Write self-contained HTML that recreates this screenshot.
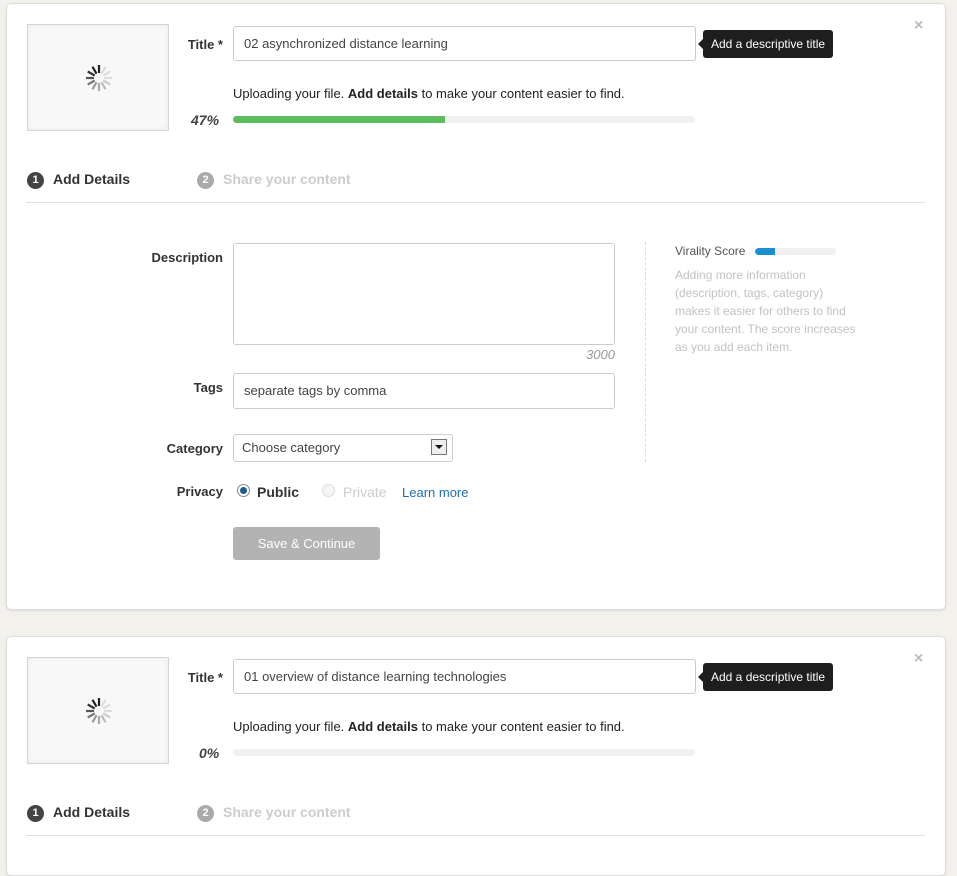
<!DOCTYPE html>
<html><head><meta charset="utf-8"><style>
*{box-sizing:border-box;margin:0;padding:0}
body{width:957px;height:856px;background:#f3f1ec;font-family:"Liberation Sans",Arial,sans-serif;position:relative;overflow:hidden;font-size:13px;color:#333}
.card{position:absolute;left:6px;width:940px;background:#fff;border:1px solid #dcdcdc;border-radius:5px;box-shadow:0 1px 2px rgba(0,0,0,.08)}
.a{position:absolute}
.thumb{left:20px;width:142px;height:107px;background:#f8f8f8;border:1px solid #d5d5d5;box-shadow:inset 0 0 6px rgba(0,0,0,.06)}
.lbl{font-weight:bold;color:#333;text-align:right;font-size:13px}
.inp{border:1px solid #ccc;border-radius:3px;background:#fff;font-size:13px;color:#444;padding-left:10px}
.tip{background:#1e1e1e;color:#fff;border-radius:3px;font-size:12px;padding:0 8px;line-height:28px;height:28px}
.tip:before{content:"";position:absolute;left:-5px;top:9px;border:5px solid transparent;border-left:0;border-right-color:#1e1e1e}
.bar{height:7px;background:#f0f0f0;border-radius:4px;overflow:hidden;width:462px}
.step{font-weight:bold;font-size:14px}
.num{display:inline-block;width:17px;height:17px;border-radius:50%;color:#fff;font-size:11px;text-align:center;line-height:17px;vertical-align:1px;margin-right:9px}
.x{color:#bbb;font-size:16px;font-weight:bold}
</style></head><body>

<svg width="0" height="0" style="position:absolute"><defs><g id="sp" stroke-width="2.2">
<line x1="0" y1="-5" x2="0" y2="-13" stroke="#222"/>
<line x1="0" y1="-5" x2="0" y2="-13" stroke="#ddd" transform="rotate(30)"/>
<line x1="0" y1="-5" x2="0" y2="-13" stroke="#ddd" transform="rotate(60)"/>
<line x1="0" y1="-5" x2="0" y2="-13" stroke="#ddd" transform="rotate(90)"/>
<line x1="0" y1="-5" x2="0" y2="-13" stroke="#ccc" transform="rotate(120)"/>
<line x1="0" y1="-5" x2="0" y2="-13" stroke="#bbb" transform="rotate(150)"/>
<line x1="0" y1="-5" x2="0" y2="-13" stroke="#aaa" transform="rotate(180)"/>
<line x1="0" y1="-5" x2="0" y2="-13" stroke="#999" transform="rotate(210)"/>
<line x1="0" y1="-5" x2="0" y2="-13" stroke="#777" transform="rotate(240)"/>
<line x1="0" y1="-5" x2="0" y2="-13" stroke="#555" transform="rotate(270)"/>
<line x1="0" y1="-5" x2="0" y2="-13" stroke="#333" transform="rotate(300)"/>
<line x1="0" y1="-5" x2="0" y2="-13" stroke="#222" transform="rotate(330)"/>
</g></defs></svg>

<div class="card" style="top:3px;height:607px">
 <div class="a thumb" style="top:20px"><svg class="a" style="left:56px;top:38px" width="30" height="30" viewBox="-15 -15 30 30"><use href="#sp"/></svg></div>
 <div class="a lbl" style="left:159px;top:33px;width:57px">Title *</div>
 <div class="a inp" style="left:226px;top:22px;width:463px;height:35px;line-height:33px">02 asynchronized distance learning</div>
 <div class="a tip" style="left:696px;top:26px">Add a descriptive title</div>
 <div class="a x" style="left:907px;top:13px">×</div>
 <div class="a" style="left:226px;top:82px;color:#222">Uploading your file. <b>Add details</b> to make your content easier to find.</div>
 <div class="a" style="left:184px;top:108px;font-weight:bold;font-style:italic;font-size:14px;color:#444">47%</div>
 <div class="a bar" style="left:226px;top:112px"><div style="width:212px;height:7px;background:#5cbd5d"></div></div>
 <div class="a step" style="left:20px;top:167px;color:#333"><span class="num" style="background:#444">1</span>Add Details</div>
 <div class="a step" style="left:190px;top:167px;color:#ccc"><span class="num" style="background:#aaa">2</span>Share your content</div>
 <div class="a" style="left:19px;top:198px;width:899px;border-top:1px solid #e0e0e0"></div>

 <div class="a lbl" style="left:99px;top:246px;width:117px">Description</div>
 <div class="a inp" style="left:226px;top:239px;width:382px;height:102px"></div>
 <div class="a" style="left:559px;top:343px;width:49px;text-align:right;font-style:italic;color:#999">3000</div>
 <div class="a lbl" style="left:99px;top:376px;width:117px">Tags</div>
 <div class="a inp" style="left:226px;top:369px;width:382px;height:36px;line-height:34px">separate tags by comma</div>
 <div class="a lbl" style="left:99px;top:437px;width:117px">Category</div>
 <div class="a inp" style="left:226px;top:430px;width:220px;height:28px;line-height:26px;padding-left:8px">Choose category
  <div class="a" style="right:5px;top:4px;width:16px;height:16px;border:1px solid #777;background:#eee"><div class="a" style="left:3px;top:5px;border:4px solid transparent;border-top:4px solid #111;border-bottom:0"></div></div></div>
 <div class="a lbl" style="left:99px;top:480px;width:117px">Privacy</div>
 <div class="a" style="left:230px;top:480px;width:13px;height:13px;border-radius:50%;border:1px solid #888;background:#fff"><div style="margin:2px;width:7px;height:7px;border-radius:50%;background:#1a5d8f"></div></div>
 <div class="a" style="left:250px;top:480px;font-weight:bold;font-size:14px;color:#333">Public</div>
 <div class="a" style="left:315px;top:480px;width:13px;height:13px;border-radius:50%;border:1px solid #ddd;background:#f4f4f4"></div>
 <div class="a" style="left:336px;top:480px;font-size:14px;color:#ccc">Private</div>
 <div class="a" style="left:395px;top:481px;color:#1f6fb2">Learn more</div>
 <div class="a" style="left:226px;top:523px;width:147px;height:33px;background:#b3b3b3;border-radius:3px;color:#fff;text-align:center;line-height:33px;font-size:13px">Save &amp; Continue</div>

 <div class="a" style="left:638px;top:238px;height:220px;border-left:1px dashed #ddd"></div>
 <div class="a" style="left:668px;top:240px;font-size:12px;color:#555">Virality Score</div>
 <div class="a" style="left:748px;top:244px;width:81px;height:7px;border-radius:4px;background:#f0f0f0;overflow:hidden"><div style="width:20px;height:7px;background:#1a8fd0;border-radius:4px 0 0 4px"></div></div>
 <div class="a" style="left:668px;top:262px;width:230px;font-size:12px;line-height:18px;color:#c2c2c2;white-space:nowrap">Adding more information<br>(description, tags, category)<br>makes it easier for others to find<br>your content. The score increases<br>as you add each item.</div>
</div>

<div class="card" style="top:636px;height:240px">
 <div class="a thumb" style="top:20px"><svg class="a" style="left:56px;top:38px" width="30" height="30" viewBox="-15 -15 30 30"><use href="#sp"/></svg></div>
 <div class="a lbl" style="left:159px;top:33px;width:57px">Title *</div>
 <div class="a inp" style="left:226px;top:22px;width:463px;height:35px;line-height:33px">01 overview of distance learning technologies</div>
 <div class="a tip" style="left:696px;top:26px">Add a descriptive title</div>
 <div class="a x" style="left:907px;top:13px">×</div>
 <div class="a" style="left:226px;top:82px;color:#222">Uploading your file. <b>Add details</b> to make your content easier to find.</div>
 <div class="a" style="left:192px;top:108px;font-weight:bold;font-style:italic;font-size:14px;color:#444">0%</div>
 <div class="a bar" style="left:226px;top:112px"></div>
 <div class="a step" style="left:20px;top:167px;color:#333"><span class="num" style="background:#444">1</span>Add Details</div>
 <div class="a step" style="left:190px;top:167px;color:#ccc"><span class="num" style="background:#aaa">2</span>Share your content</div>
 <div class="a" style="left:19px;top:198px;width:899px;border-top:1px solid #e0e0e0"></div>
</div>
</body></html>
